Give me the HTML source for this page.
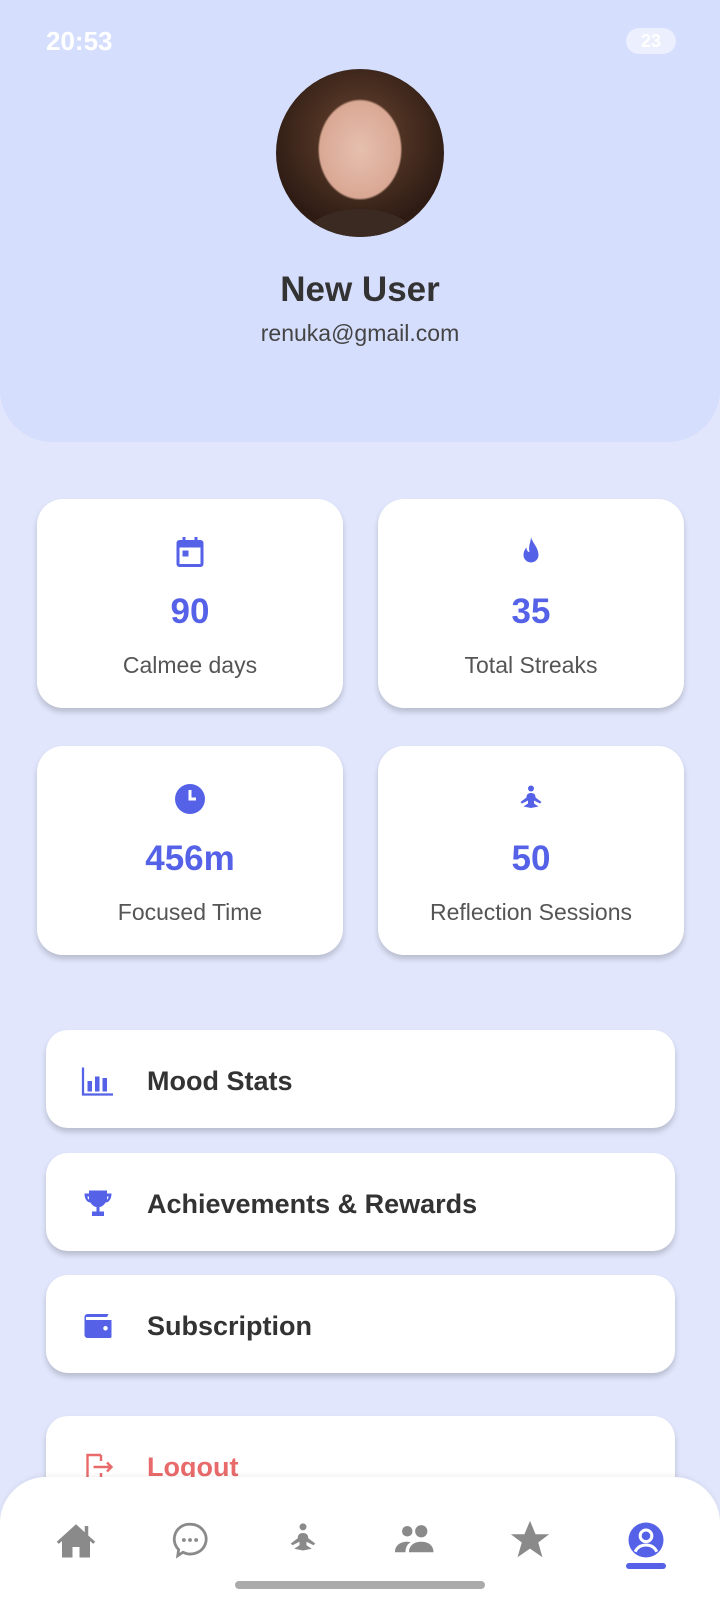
<!DOCTYPE html>
<html><head><meta charset="utf-8"><style>
*{margin:0;padding:0;box-sizing:border-box}
body{width:720px;height:1600px;background:#e1e6fc;font-family:"Liberation Sans",sans-serif;position:relative;overflow:hidden}
.hdr{position:absolute;left:0;top:0;width:720px;height:442px;background:#d6defd;border-radius:0 0 52px 52px}
.av{position:absolute;left:276px;top:69px;width:168px;height:168px;border-radius:50%;background:radial-gradient(ellipse 30% 36% at 50% 48%,#e6bfae 0%,#d9a894 80%,transparent 84%),radial-gradient(circle at 50% 40%,#6a4530,#2e1c14 70%);overflow:hidden}
.av:after{content:"";position:absolute;left:28px;top:140px;width:112px;height:60px;border-radius:50%;background:#3a2a22}
.name{position:absolute;top:270px;width:720px;text-align:center;font-size:35px;font-weight:bold;color:#333}
.mail{position:absolute;top:320px;width:720px;text-align:center;font-size:23px;color:#444}
.card{position:absolute;width:306px;height:209px;background:#fff;border-radius:26px;box-shadow:0 4px 6px rgba(0,0,0,.18);text-align:center}
.card svg{position:absolute;left:135px;top:35px}
.card .n{position:absolute;top:93px;width:100%;font-size:35px;font-weight:bold;color:#5562e8}
.card .l{position:absolute;top:153px;width:100%;font-size:23px;color:#555}
.mi{position:absolute;left:46px;width:629px;height:98px;background:#fff;border-radius:22px;box-shadow:0 4px 6px rgba(0,0,0,.18)}
.mi svg{position:absolute;left:80px;top:31px}
.mi span{position:absolute;left:101px;top:36px;font-size:27px;font-weight:bold;color:#333}
.nav{position:absolute;left:0;top:1477px;width:720px;height:130px;background:#fff;border-radius:46px 46px 0 0;box-shadow:0 -2px 5px rgba(0,0,0,.05)}
.nav svg{position:absolute;top:42px}
</style></head><body>
<div class="hdr"></div>
<div style="position:absolute;left:46px;top:26px;font-size:26px;font-weight:bold;color:#fff">20:53</div>
<div style="position:absolute;left:626px;top:28px;width:50px;height:26px;border-radius:13px;background:rgba(255,255,255,.5);color:#fff;font-size:18px;text-align:center;line-height:26px;font-weight:bold">23</div>
<div class="av"></div>
<div class="name">New User</div>
<div class="mail">renuka@gmail.com</div>

<div class="card" style="left:37px;top:499px"><svg width="36" height="36" viewBox="0 0 24 24"><path fill="#5562e8" d="M7 2h2v2h6V2h2v2h2a2 2 0 012 2v14a2 2 0 01-2 2H5a2 2 0 01-2-2V6a2 2 0 012-2h2zM5 9v11h14V9zm2 2h4v4H7z"/></svg><div class="n">90</div><div class="l">Calmee days</div></div>
<div class="card" style="left:378px;top:499px"><svg width="36" height="36" viewBox="0 0 24 24"><path fill="#5562e8" d="M12 2c1 4 5 7 5 12a5 5 0 01-10 0c0-3 2-5 2-5 0 2 1 3 2 3-1-4 1-7 1-10z"/></svg><div class="n">35</div><div class="l">Total Streaks</div></div>
<div class="card" style="left:37px;top:746px"><svg width="36" height="36" viewBox="0 0 24 24"><circle cx="12" cy="12" r="10" fill="#5562e8"/><path d="M12 6v6h4" stroke="#fff" stroke-width="2" fill="none"/></svg><div class="n">456m</div><div class="l">Focused Time</div></div>
<div class="card" style="left:378px;top:746px"><svg width="36" height="36" viewBox="0 0 24 24"><circle cx="12" cy="5" r="2" fill="#5562e8"/><path fill="#5562e8" d="M12 8c-2 0-3 1-3 3l-4 3 1 1 4-2 0 2-3 2 5 1 5-1-3-2 0-2 4 2 1-1-4-3c0-2-1-3-3-3z"/></svg><div class="n">50</div><div class="l">Reflection Sessions</div></div>

<div class="mi" style="top:1030px"><svg width="36" height="36" viewBox="0 0 24 24" style="left:34px;top:33px"><path fill="none" stroke="#5562e8" stroke-width="1.5" d="M2 3v18h20"/><rect x="5" y="12" width="3" height="7" fill="#5562e8"/><rect x="10" y="9" width="3" height="10" fill="#5562e8"/><rect x="15" y="10" width="3" height="9" fill="#5562e8"/></svg><span>Mood Stats</span></div>
<div class="mi" style="top:1153px"><svg width="36" height="36" viewBox="0 0 24 24" style="left:34px;top:33px"><path fill="#5562e8" d="M6 3h12v2h3c0 4-2 6-4 6-1 2-3 3-4 3v3h3v3H8v-3h3v-3c-1 0-3-1-4-3-2 0-4-2-4-6h3zm-1 4c0 1 .5 2 1 2V7zm13 0v2c.5 0 1-1 1-2z"/></svg><span>Achievements &amp; Rewards</span></div>
<div class="mi" style="top:1275px"><svg width="36" height="36" viewBox="0 0 24 24" style="left:34px;top:33px"><path fill="#5562e8" d="M4 6h14l1-2H5a2 2 0 00-2 2v12a2 2 0 002 2h15a1 1 0 001-1V8H4zm13 6a1.5 1.5 0 110 3 1.5 1.5 0 010-3z"/></svg><span>Subscription</span></div>
<div class="mi" style="top:1416px"><svg width="36" height="36" viewBox="0 0 24 24" style="left:34px;top:33px"><path fill="none" stroke="#e86a6a" stroke-width="1.6" d="M14 4H5v16h9M14 8v-4M14 20v-4M9 12h12M18 9l3 3-3 3"/></svg><span style="color:#e86a6a">Logout</span></div>

<div class="nav">
<svg width="42" height="42" viewBox="0 0 24 24" style="left:55px"><path fill="#8a8a8a" d="M12 3 1 13l1.2 1.2L4 12.6V22h6v-6h4v6h6v-9.4l1.8 1.6L23 13l-4-3.6V4h-2v3.6z"/></svg>
<svg width="42" height="42" viewBox="0 0 24 24" style="left:169px"><path fill="none" stroke="#8a8a8a" stroke-width="1.6" d="M12 3a9 8.5 0 11-4 16l-3 2 .5-3.5A8.5 8.5 0 0112 3z"/><circle cx="8.5" cy="12" r="1.1" fill="#8a8a8a"/><circle cx="12" cy="12" r="1.1" fill="#8a8a8a"/><circle cx="15.5" cy="12" r="1.1" fill="#8a8a8a"/></svg>
<svg width="42" height="42" viewBox="0 0 24 24" style="left:282px"><circle cx="12" cy="4.5" r="2" fill="#8a8a8a"/><path fill="#8a8a8a" d="M12 8c-2 0-3 1-3 3l-4 3 1 1 4-2 0 2-3 2 5 1 5-1-3-2 0-2 4 2 1-1-4-3c0-2-1-3-3-3z"/></svg>
<svg width="46" height="42" viewBox="0 0 26 24" style="left:393px"><circle cx="8" cy="7" r="3" fill="#8a8a8a"/><circle cx="16" cy="7" r="3.5" fill="#8a8a8a"/><path fill="#8a8a8a" d="M1 19c0-4 3-6 7-6 1 0 2 .3 2 .3-2 1-3 3-3 5.7zM9 19c0-4 3-6 7-6s7 2 7 6z"/></svg>
<svg width="46" height="46" viewBox="0 0 24 24" style="left:507px;top:40px"><path fill="#8a8a8a" d="M12 2l2.9 7H22l-5.7 4.3 2.2 7.7L12 16.5 5.5 21l2.2-7.7L2 9h7.1z"/></svg>
<svg width="40" height="42" viewBox="0 0 24 24" style="left:626px"><circle cx="12" cy="12" r="10.5" fill="#5562e8"/><circle cx="12" cy="9.5" r="3.5" fill="none" stroke="#fff" stroke-width="1.8"/><path d="M5.5 19c1.5-3 4-4 6.5-4s5 1 6.5 4" fill="none" stroke="#fff" stroke-width="1.8"/></svg>
<div style="position:absolute;left:626px;top:86px;width:40px;height:6px;border-radius:3px;background:#5562e8"></div>
<div style="position:absolute;left:235px;top:104px;width:250px;height:8px;border-radius:4px;background:#aaa"></div>
</div>
</body></html>
